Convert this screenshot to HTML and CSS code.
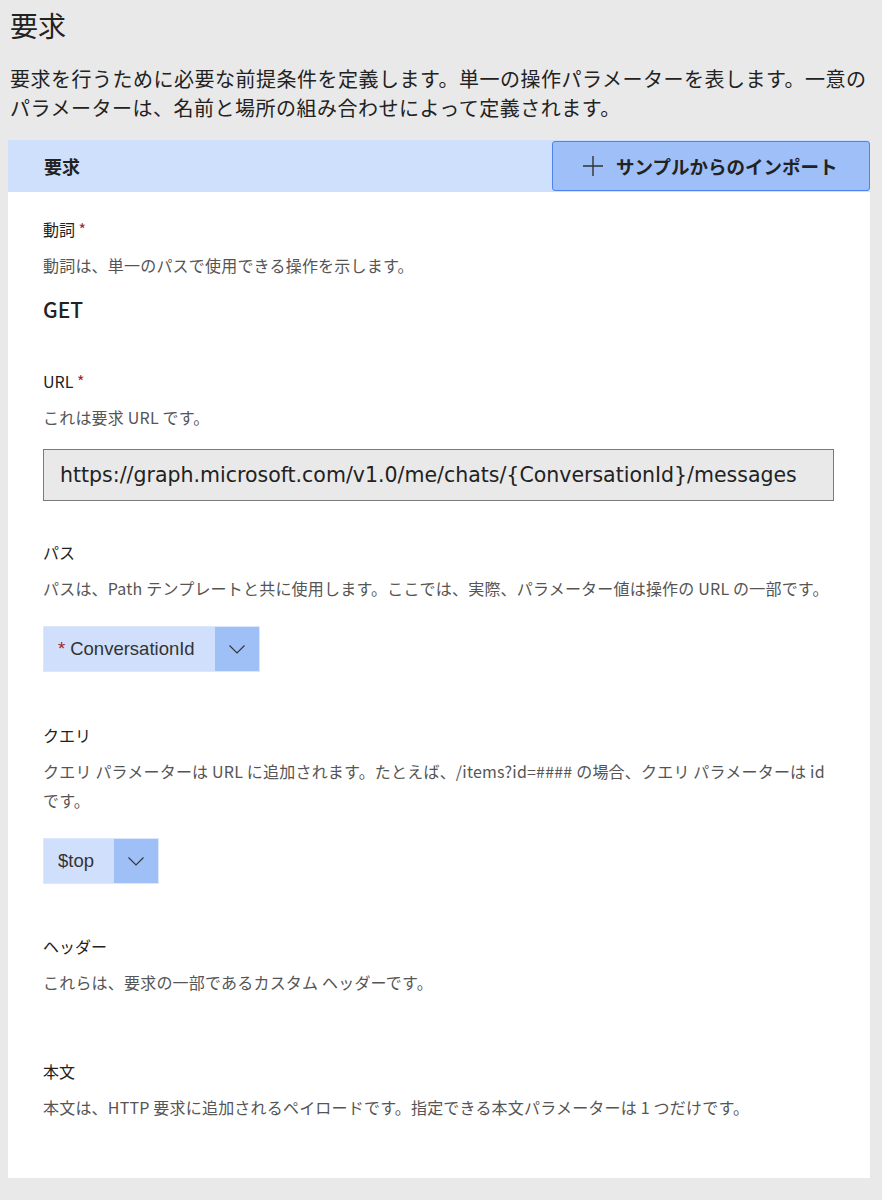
FILE: index.html
```html
<!DOCTYPE html>
<html lang="ja">
<head>
<meta charset="utf-8">
<title>要求</title>
<link rel="stylesheet" href="styles.css">
</head>
<body>
<div class="page">
  <h1 class="title">要求</h1>
  <p class="intro">要求を行うために必要な前提条件を定義します。単一の操作パラメーターを表します。一意のパラメーターは、名前と場所の組み合わせによって定義されます。</p>

  <section class="panel">
    <div class="panel-head">
      <span class="panel-title">要求</span>
      <button class="import-btn" type="button">
        <svg class="plus" width="22" height="22" viewBox="0 0 22 22" aria-hidden="true"><path d="M11 1v20M1 11h20" stroke="#333" stroke-width="1.4" fill="none"/></svg>
        <span>サンプルからのインポート</span>
      </button>
    </div>

    <div class="panel-body">
      <div class="field">
        <div class="label">動詞 <span class="req">*</span></div>
        <div class="desc">動詞は、単一のパスで使用できる操作を示します。</div>
        <div class="verb">GET</div>
      </div>

      <div class="field f-url">
        <div class="label">URL <span class="req">*</span></div>
        <div class="desc">これは要求 URL です。</div>
        <div class="url-box">https://graph.microsoft.com/v1.0/me/chats/{ConversationId}/messages</div>
      </div>

      <div class="field f-path">
        <div class="label">パス</div>
        <div class="desc">パスは、Path テンプレートと共に使用します。ここでは、実際、パラメーター値は操作の URL の一部です。</div>
        <div class="dropdown">
          <span class="dd-label"><span class="req">*</span> ConversationId</span>
          <span class="dd-chev"><svg width="16" height="9" viewBox="0 0 16 9" aria-hidden="true"><path d="M0.5 0.5L8 8L15.5 0.5" stroke="#333" stroke-width="1.1" fill="none"/></svg></span>
        </div>
      </div>

      <div class="field f-query">
        <div class="label">クエリ</div>
        <div class="desc">クエリ パラメーターは URL に追加されます。たとえば、/items?id=#### の場合、クエリ パラメーターは id です。</div>
        <div class="dropdown">
          <span class="dd-label">$top</span>
          <span class="dd-chev"><svg width="16" height="9" viewBox="0 0 16 9" aria-hidden="true"><path d="M0.5 0.5L8 8L15.5 0.5" stroke="#333" stroke-width="1.1" fill="none"/></svg></span>
        </div>
      </div>

      <div class="field f-header">
        <div class="label">ヘッダー</div>
        <div class="desc">これらは、要求の一部であるカスタム ヘッダーです。</div>
      </div>

      <div class="field f-body">
        <div class="label">本文</div>
        <div class="desc">本文は、HTTP 要求に追加されるペイロードです。指定できる本文パラメーターは 1 つだけです。</div>
      </div>
    </div>
  </section>
</div>
</body>
</html>
```

FILE: styles.css
```css
html, body {
  margin: 0;
  padding: 0;
  background: #e9e9e9;
}
body {
  padding: 0 8px 8px 8px;
  font-family: "Noto Sans CJK JP", "Noto Sans", sans-serif;
  color: #222;
}
.page {
  display: flex;
  flex-direction: column;
}
.title {
  margin: 0;
  padding: 5px 0 0 2px;
  font-size: 28px;
  font-weight: 400;
  line-height: 40px;
  color: #222;
}
.intro {
  margin: 19px 0 0 0;
  padding-left: 2px;
  max-width: 862px;
  font-size: 20px;
  line-height: 29px;
  letter-spacing: 0.5px;
  color: #222;
}
.panel {
  margin-top: 18px;
  background: #fff;
  width: 862px;
}
.panel-head {
  display: flex;
  align-items: center;
  justify-content: space-between;
  height: 52px;
  background: #cfe0fc;
}
.panel-title {
  padding-left: 36px;
  font-size: 18px;
  font-weight: 700;
}
.import-btn {
  display: flex;
  align-items: center;
  gap: 12px;
  height: 50px;
  width: 318px;
  padding: 0 0 0 29px;
  box-sizing: border-box;
  background: #9fbff8;
  border: 1px solid #4f82ef;
  border-radius: 3px;
  font-family: "Noto Sans CJK JP", sans-serif;
  font-size: 18.5px;
  font-weight: 700;
  color: #222;
}
.plus {
  flex: none;
}
.panel-body {
  padding: 25px 36px 56px 35px;
  display: flex;
  flex-direction: column;
}
.field {
  display: flex;
  flex-direction: column;
  align-items: flex-start;
}
.label {
  font-size: 16px;
  line-height: 24px;
  color: #222;
}
.req {
  color: #a4262c;
}
.desc {
  margin-top: 10px;
  font-size: 16px;
  line-height: 29px;
  color: #555;
  letter-spacing: 0.2px;
}
.verb {
  margin-top: 14px;
  font-size: 21px;
  line-height: 30px;
  font-weight: 500;
  color: #222;
}
.f-url { margin-top: 45px; }
.url-box {
  margin-top: 17px;
  box-sizing: border-box;
  width: 791px;
  height: 52px;
  padding: 0 0 0 16px;
  display: flex;
  align-items: center;
  background: #e9e9e9;
  border: 1px solid #7a7a7a;
  font-family: "DejaVu Sans", Verdana, sans-serif;
  font-size: 20.5px;
  color: #222;
  white-space: nowrap;
}
.f-path { margin-top: 39px; }
.f-query { margin-top: 51px; }
.f-header { margin-top: 50px; }
.f-body { margin-top: 62px; }
.dropdown {
  margin-top: 23px;
  display: flex;
  height: 46px;
  border: 1px solid #dbe7fd;
  box-sizing: border-box;
  background: #d0e0fc;
}
.dd-label {
  display: flex;
  align-items: center;
  gap: 5px;
  padding: 0 20px 0 14px;
  font-family: "Liberation Sans", Arial, sans-serif;
  font-size: 18.5px;
  color: #333;
}
.dd-chev {
  width: 44px;
  display: flex;
  align-items: center;
  justify-content: center;
  background: #9fbff7;
}
```
